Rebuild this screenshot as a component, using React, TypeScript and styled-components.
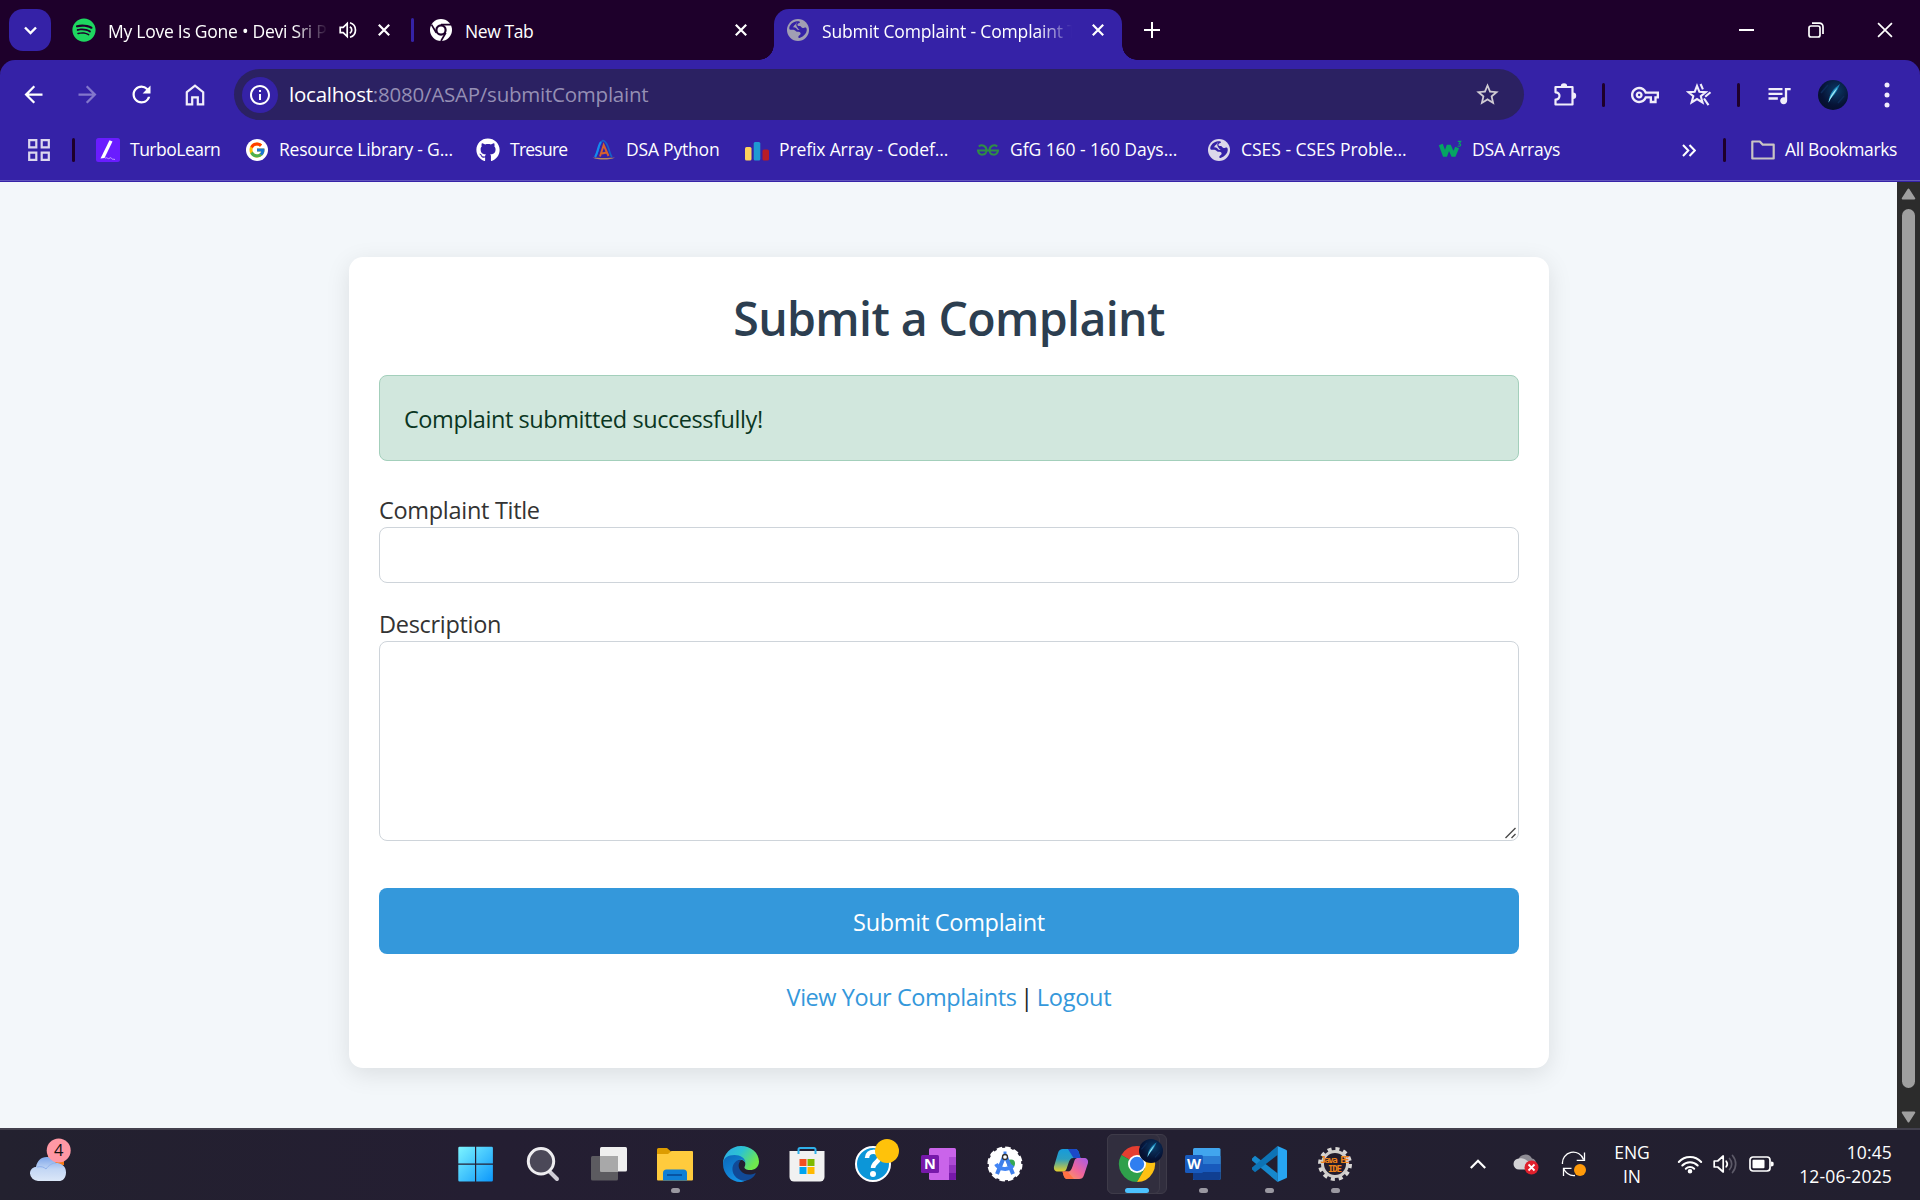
import React from "react";
import styled, { createGlobalStyle } from "styled-components";
import { FaSpotify, FaGithub } from "react-icons/fa";
import { FcGoogle } from "react-icons/fc";
import {
  MdArrowBack,
  MdArrowForward,
  MdRefresh,
  MdStarBorder,
  MdInfoOutline,
  MdQueueMusic,
  MdOutlineVpnKey,
} from "react-icons/md";

const GlobalStyle = createGlobalStyle`
  * { box-sizing: border-box; }
  body { margin: 0; overflow: hidden; font-family: "Open Sans", "Noto Sans", sans-serif; }
`;

const Screen = styled.div`
  width: 1920px;
  height: 1200px;
  display: flex;
  flex-direction: column;
  overflow: hidden;
  background: #1e002b;
`;

/* ---------- browser chrome ---------- */

const TabStrip = styled.header`
  height: 60px;
  flex: none;
  display: flex;
  align-items: center;
  padding-left: 9px;
  background: #1e002b;
  color: #fff;
`;

const TabSearch = styled.button`
  width: 42px;
  height: 42px;
  padding: 0;
  border: 0;
  border-radius: 14px;
  background: #3522a7;
  display: grid;
  place-items: center;
`;

const Tab = styled.div<{ $w: number; $pl: number; $active?: boolean }>`
  position: relative;
  width: ${(p) => p.$w}px;
  height: ${(p) => (p.$active ? 51 : 42)}px;
  align-self: ${(p) => (p.$active ? "flex-end" : "center")};
  padding-left: ${(p) => p.$pl}px;
  padding-bottom: ${(p) => (p.$active ? 9 : 0)}px;
  display: flex;
  align-items: center;
  border-radius: 15px 15px 0 0;
  background: ${(p) => (p.$active ? "#3522a7" : "transparent")};
  ${(p) =>
    p.$active &&
    `&::before, &::after {
      content: "";
      position: absolute;
      bottom: 0;
      width: 15px;
      height: 15px;
    }
    &::before { left: -15px; background: radial-gradient(circle at 0 0, transparent 14.5px, #3522a7 15px); }
    &::after { right: -15px; background: radial-gradient(circle at 100% 0, transparent 14.5px, #3522a7 15px); }`}
`;

const TabTitle = styled.span<{ $w: number; $ml: number; $ls?: number; $fade?: boolean }>`
  width: ${(p) => p.$w}px;
  margin-left: ${(p) => p.$ml}px;
  padding-top: 1px;
  white-space: nowrap;
  font-size: 17.5px;
  line-height: 26px;
  letter-spacing: ${(p) => p.$ls ?? 0}px;
  ${(p) => p.$fade && "mask-image: linear-gradient(90deg, #000 calc(100% - 36px), transparent calc(100% - 2px));"}
`;

const TabDivider = styled.i`
  width: 3px;
  height: 24px;
  border-radius: 2px;
  background: #3522a7;
`;

const IconSlot = styled.span<{ $w: number; $h?: number; $ml?: number; $c?: string }>`
  flex: none;
  width: ${(p) => p.$w}px;
  height: ${(p) => p.$h ?? p.$w}px;
  margin-left: ${(p) => p.$ml ?? 0}px;
  color: ${(p) => p.$c ?? "#fff"};
  display: flex;
  align-items: center;
  justify-content: center;
  svg { flex: none; display: block; }
`;

const WindowControls = styled.div`
  margin-left: auto;
  padding-right: 1px;
  display: flex;
  height: 58px;
`;

const WindowButton = styled.span`
  width: 69px;
  display: grid;
  place-items: center;
`;

const ToolArea = styled.div`
  height: 122px;
  flex: none;
  background: #3522a7;
  border-radius: 15px 15px 0 0;
  border-bottom: 1px solid #3522a7;
  box-shadow: inset 0 -1px 0 #6154bd;
`;

const Toolbar = styled.div`
  height: 69px;
  display: flex;
  align-items: center;
`;

const Omnibox = styled.div`
  width: 1290px;
  height: 51px;
  margin-left: 25px;
  padding: 0 24px 0 8px;
  border-radius: 26px;
  background: #2b2162;
  display: flex;
  align-items: center;
`;

const SiteInfo = styled.span`
  width: 36px;
  height: 36px;
  border-radius: 50%;
  background: #3522a7;
  color: #fff;
  display: grid;
  place-items: center;
`;

const Url = styled.span`
  flex: 1;
  margin-left: 11px;
  padding-bottom: 1px;
  font-size: 20.5px;
  letter-spacing: -0.23px;
  line-height: 30px;
  color: #958fb4;
  b { font-weight: 400; color: #fff; }
`;

const Separator = styled.i<{ $ml: number }>`
  flex: none;
  width: 3px;
  height: 24px;
  margin-left: ${(p) => p.$ml}px;
  border-radius: 2px;
  background: #1e002b;
`;

const Avatar = styled.span<{ $d: number }>`
  display: block;
  width: ${(p) => p.$d}px;
  height: ${(p) => p.$d}px;
  border-radius: 50%;
  overflow: hidden;
  background: radial-gradient(circle at 60% 35%, #0b3a66, #061336 55%, #040b22);
  svg { display: block; width: 100%; height: 100%; }
`;

const BookmarkBar = styled.nav`
  height: 42px;
  display: flex;
  align-items: center;
  color: #fff;
  font-size: 17.5px;
  line-height: 26px;
`;

const Bookmark = styled.a<{ $w: number; $ls?: number }>`
  flex: none;
  width: ${(p) => p.$w}px;
  display: flex;
  align-items: center;
  gap: 10px;
  white-space: nowrap;
  letter-spacing: ${(p) => p.$ls ?? -0.2}px;
  span:last-child { padding-bottom: 2px; }
`;

/* ---------- web page ---------- */

const Viewport = styled.div`
  flex: 1;
  display: flex;
  min-height: 0;
`;

const Page = styled.main`
  flex: 1;
  padding: 75px 0 0 349px;
  background: #f3f7fa;
`;

const Card = styled.section`
  width: 1200px;
  height: 811px;
  padding: 32px 30px 0;
  border-radius: 14px;
  background: #fff;
  box-shadow: 0 6px 24px rgba(0, 0, 0, 0.1);
`;

const Heading = styled.h2`
  margin: 0 0 28px;
  font-size: 46.5px;
  line-height: 58px;
  font-weight: 600;
  letter-spacing: -0.63px;
  text-align: center;
  color: #2c3e50;
`;

const Alert = styled.div`
  height: 86px;
  margin-bottom: 31px;
  padding: 25px 24px 0;
  border: 1px solid #a3cfbb;
  border-radius: 8px;
  background: #d1e7dd;
  color: #0a3622;
  font-size: 23.5px;
  line-height: 36px;
  letter-spacing: -0.43px;
`;

const Label = styled.label`
  display: block;
  height: 35px;
  font-size: 23.5px;
  line-height: 37px;
  letter-spacing: -0.3px;
  color: #333;
`;

const TextInput = styled.input`
  display: block;
  width: 100%;
  height: 56px;
  margin-bottom: 23px;
  border: 1px solid #ced4da;
  border-radius: 8px;
  background: #fff;
`;

const AreaWrap = styled.div`
  position: relative;
  height: 200px;
  margin-bottom: 47px;
  svg { position: absolute; right: 2px; bottom: 2px; }
`;

const TextArea = styled.textarea`
  display: block;
  width: 100%;
  height: 200px;
  resize: none;
  border: 1px solid #ced4da;
  border-radius: 8px;
  background: #fff;
`;

const SubmitButton = styled.button`
  display: block;
  width: 100%;
  height: 66px;
  margin-bottom: 25px;
  padding: 2px 0 0;
  border: 0;
  border-radius: 8px;
  background: #3498db;
  color: #fff;
  font: 23.5px "Open Sans", sans-serif;
  letter-spacing: -0.3px;
`;

const Links = styled.p`
  margin: 0;
  text-align: center;
  font-size: 23.5px;
  line-height: 36px;
  letter-spacing: -0.25px;
  color: #212529;
  a { color: #3498db; }
  a:first-child { letter-spacing: -0.45px; }
  span { margin: 0 -2px; }
`;

const Scrollbar = styled.div`
  width: 23px;
  background: #2c2c2c;
  display: flex;
  flex-direction: column;
  align-items: center;
  padding: 6px 0 5px;
`;

const Thumb = styled.div`
  width: 13px;
  height: 880px;
  margin: 9px 0 23px;
  border-radius: 7px;
  background: #9f9f9f;
`;

/* ---------- taskbar ---------- */

const Taskbar = styled.footer`
  height: 72px;
  flex: none;
  display: flex;
  border-top: 2px solid #42404d;
  background: linear-gradient(90deg, #23212f, #241e32 25%, #231f31 60%, #221f2f);
  color: #fff;
`;

const Weather = styled.div`
  width: 444px;
  padding: 7px 0 0 29px;
`;

const AppButton = styled.div`
  position: relative;
  width: 66px;
  height: 70px;
  display: flex;
  flex-direction: column;
  align-items: center;
  padding-top: 16px;
  svg { position: relative; display: block; overflow: visible; }
`;

const ActiveTile = styled.i<{ $w: number }>`
  position: absolute;
  left: 3px;
  top: 4px;
  width: ${(p) => p.$w}px;
  height: 60px;
  border: 1px solid #3e3b49;
  border-radius: 6px;
  background: #312e3e;
`;

const Running = styled.i<{ $active?: boolean }>`
  position: relative;
  width: ${(p) => (p.$active ? 24 : 9)}px;
  height: 5px;
  margin-top: 6px;
  border-radius: 3px;
  background: ${(p) => (p.$active ? "#4cc2ff" : "#9a98a1")};
`;

const AppBadge = styled.span`
  position: absolute;
  left: 35px;
  top: 9px;
`;

const Tray = styled.div`
  margin-left: auto;
  display: flex;
  align-items: center;
  height: 67px;
  padding-right: 28px;
`;

const TrayText = styled.div<{ $w: number; $align: string; $ls?: number }>`
  width: ${(p) => p.$w}px;
  text-align: ${(p) => p.$align};
  font-size: 17.5px;
  line-height: 24px;
  letter-spacing: ${(p) => p.$ls ?? 0}px;
`;

/* ---------- drawings ---------- */

const Cross = ({ s = 12, w = 2.2 }: { s?: number; w?: number }) => (
  <svg width={s} height={s} viewBox="0 0 12 12" stroke="#fff" strokeWidth={(w * 12) / s} fill="none">
    <path d="M.8.8l10.4 10.4M11.2.8L.8 11.2" />
  </svg>
);

const Globe = ({ c }: { c: string }) => (
  <svg width="22" height="22" viewBox="0 0 22 22">
    <circle cx="11" cy="11" r="11" fill={c} />
    <path
      d="M8.6 2.6c2.2-.8 4.6-.5 4.3.9-.2 1-2.3.6-2.5 2-.2 1.1.9 1.5 2.3 1.6 1.6.1 1.4 1.8 2.9 2 1.6.2 2.6-1.2 3.7-.2.9 1 .5 4-1.1 6.1-1.4 1.9-3.6 3.4-5.6 3.9-1.3.2-1.6-.6-1.1-1.6.6-1.2 2.4-1.3 2.1-3-.2-1.3-1.6-1.5-3.3-1.5-1.8 0-1.8-1.9-3.8-2.1-1.5-.1-3 .4-4.1-.5C1.7 7.3 4.5 3.7 8.6 2.6z"
      fill="#3522a7"
    />
    <path d="M10.4 3c-1.8.7-.9 2.2-2.600 2.900-1.300.6-1 2-2.300 2.300 1.800 0 3.500.3 4.200 1.600.5 1.100 1.700 1.200 3 1.300-1.400-1.100-2.700-3-3.200-4.100-.4-1.300-.4-2.800.9-4z" fill={c} />
  </svg>
);

const ChromeMono = () => (
  <svg width="22" height="22" viewBox="0 0 22 22">
    <circle cx="11" cy="11" r="11" fill="#fff" />
    <circle cx="11" cy="11" r="5.7" fill="#1e002b" />
    <circle cx="11" cy="11" r="3.5" fill="#fff" />
    <path d="M11 5.600h10M6.300 13.800L1.500 5.600M15.800 13.700L11 22" stroke="#1e002b" strokeWidth="1.7" />
  </svg>
);

const Speaker = () => (
  <svg width="18" height="18" viewBox="0 0 18 18" fill="none" stroke="#fff" strokeWidth="1.7">
    <path d="M1.200 6.300h3l4-3.900v13.200l-4-3.900h-3z" />
    <path d="M10.800 5.800a3.600 3.600 0 010 6.400M11 1.700a7.600 7.600 0 010 14.600" />
  </svg>
);

const Comet = () => (
  <svg viewBox="0 0 30 30">
    <path d="M10.500 23C11 14 15 9 22 4c-2.500 6-4 9-7.500 12.500-2 2-3 4-4 6.500z" fill="#1b86b8" />
    <path d="M10.500 22.500C12 16 15 12 19.500 7.500 17.500 12 14.500 15.500 10.500 22.500z" fill="#9fe8f5" />
    <path d="M3 13l7-8M20 23l6-7" stroke="#0c2a57" strokeWidth="1.5" />
  </svg>
);

const Home = () => (
  <svg width="20" height="22" viewBox="0 0 20 22" fill="none" stroke="#f1eefa" strokeWidth="2.2">
    <path d="M1.800 8.200L10 1.700l8.200 6.500v12.200h-5.400v-7H7.200v7H1.800z" />
  </svg>
);

const Extension = () => (
  <svg width="26" height="26" viewBox="0 0 26 26">
    <path
      d="M3.500 5h17v17.500h-17v-4.800c5 .2 5.600-7.500 0-7.400z"
      fill="none"
      stroke="#f1eefa"
      strokeWidth="2.2"
      strokeLinejoin="round"
    />
    <path d="M8.800 4.500a3.200 3.200 0 016.400 0zM21 10.500a3.200 3.200 0 010 6.400z" fill="#f1eefa" />
  </svg>
);

const StarEdit = () => (
  <svg width="26" height="26" viewBox="0 0 26 26" fill="none" stroke="#f1eefa" strokeWidth="2.1">
    <path d="M11 3.800l2.400 6 6.300.4-4.900 4 1.700 6.300L11 17.100l-5.400 3.400 1.700-6.300-4.900-4 6.300-.4z" />
    <path d="M14.600 2l2.300 5.400M24.500 10.300l-5.300 4.500M18 16.500l4.500 6.700" />
  </svg>
);

const Grid = () => (
  <svg width="22" height="22" viewBox="0 0 22 22" fill="none" stroke="#dcd7ee" strokeWidth="2.2">
    <path d="M1.200 1.200h7.100v7.100H1.200zM13.700 1.200h7.100v7.100h-7.100zM1.200 13.700h7.100v7.100H1.200zM13.700 13.700h7.100v7.100h-7.100z" />
  </svg>
);

const Turbo = () => (
  <svg width="24" height="24" viewBox="0 0 24 24">
    <rect width="24" height="24" rx="2.5" fill="#6a1cff" />
    <path d="M13.500 2.200l3 1.300-8 16.500-4 .5z" fill="#fff" />
    <path d="M9 20.500c2-2 2.500.8 4 0s2-1.300 2.600 0 1.700.3 3.400 1" stroke="#c9a9ff" fill="none" strokeWidth=".9" />
  </svg>
);

const DsaLogo = () => (
  <svg width="24" height="24" viewBox="0 0 24 24" fill="none">
    <path d="M3 19C6.500 15 6.500 4 11 2.500c6 1.500 5.500 12.500 9 16.500" stroke="#1560c8" strokeWidth="1.7" />
    <path d="M3 19C6 15 6.500 6 9 4" stroke="#138bf0" strokeWidth="2.2" />
    <path d="M.5 19.500c5 .6 17.500.6 22.500 0-5 2.700-17 2.900-22.500 0z" fill="#b98b5d" />
    <path d="M8 18.500L11.700 7l4.800 11M9.800 15.500l5-1" stroke="#d6612f" strokeWidth="2" />
  </svg>
);

const Codeforces = () => (
  <svg width="24" height="24" viewBox="0 0 24 24">
    <rect y="9" width="6.5" height="13.500" rx="1.5" fill="#fdd15c" />
    <rect x="8.7" y="4" width="6.6" height="18.500" rx="1.5" fill="#1e9ad2" />
    <rect x="17.5" y="11.500" width="6.500" height="11" rx="1.5" fill="#b71c27" />
  </svg>
);

const Gfg = () => (
  <svg width="24" height="24" viewBox="0 0 24 24" fill="none" stroke="#2f8d46" strokeWidth="2">
    <path d="M1 12.500h22M2.800 8.500c3-2.600 7.700-.6 7.700 3.700 0 5.400-7.500 6.200-8.500.5M21.200 8.500c-3-2.600-7.700-.6-7.700 3.700 0 5.400 7.500 6.200 8.500.5" />
  </svg>
);

const W3 = () => (
  <svg width="24" height="24" viewBox="0 0 24 24" fill="none" stroke="#05a463">
    <path d="M2.800 6.500L7 18l3.800-10.500L15.500 18l3.600-8.500" strokeWidth="4.200" strokeLinejoin="bevel" />
    <path d="M19.800 3.400h3l-1.600 2.300c2.300-.3 2.200 3.200-1.600 2.300" strokeWidth="1.100" />
  </svg>
);

const Folder = () => (
  <svg width="24" height="22" viewBox="0 0 24 22" fill="none" stroke="#c9c4c4" strokeWidth="2.2" strokeLinejoin="round">
    <path d="M1.300 19.500v-17h7.500l3 3.200h10.900v13.800z" />
  </svg>
);

const WeatherArt = () => (
  <svg width="46" height="46" viewBox="0 0 46 46">
    <defs>
      <linearGradient id="cl" x1="0" y1="0" x2="0" y2="1">
        <stop offset="0" stopColor="#7ea6ea" />
        <stop offset=".5" stopColor="#c2d6f4" />
        <stop offset="1" stopColor="#dbe7f8" />
      </linearGradient>
    </defs>
    <path d="M19 17h16v11H19z" fill="#f57c17" />
    <path d="M9 44a8 8 0 01-8-7.500c0-4 3-6.500 6-6.500 1-6 5-10 10.500-10 4.500 0 7.500 2.500 9 6 5.500 0 10.500 2.500 10.500 9.500 0 6-3.500 8.500-7 8.500z" fill="url(#cl)" />
    <path d="M8 30c4-1 7 0 9 2 3-4 6-6 10-6" fill="none" stroke="#8fb1ec" strokeWidth="1" />
    <circle cx="29.7" cy="13.500" r="12" fill="#ff98a4" />
    <text x="29.7" y="19.200" fontSize="16.500" textAnchor="middle" fill="#111" fontFamily="Open Sans, sans-serif">4</text>
  </svg>
);

const WinLogo = () => (
  <svg width="36" height="36" viewBox="1.500 0 36 36">
    <defs>
      <linearGradient id="wl" x1="0" y1="0" x2="1" y2="1">
        <stop offset="0" stopColor="#7df5ff" />
        <stop offset="1" stopColor="#0c97fb" />
      </linearGradient>
    </defs>
    <path d="M2 .8h15.500v16.700H.8V2A1.200 1.200 0 012 .8zM18.700.8h15.500a1.200 1.200 0 011.200 1.200v15.500H18.700zM.8 18.700h16.700v16.700H2a1.200 1.200 0 01-1.200-1.200zM18.700 18.700h16.700v15.500a1.200 1.200 0 01-1.200 1.200H18.700z" fill="url(#wl)" />
  </svg>
);

const SearchArt = () => (
  <svg width="36" height="36" viewBox="0 0 36 36">
    <path d="M24.500 25.500l7.500 7.500" stroke="#cfcdd6" strokeWidth="4" strokeLinecap="round" />
    <circle cx="16" cy="15.300" r="12.700" fill="#4b4858" stroke="#eeedf0" strokeWidth="3" />
  </svg>
);

const TaskViewArt = () => (
  <svg width="36" height="36" viewBox="0 0 36 36">
    <rect x="0" y="10" width="27" height="24.500" rx="1.500" fill="#5c5b60" />
    <rect x="9" y="1" width="27" height="24.500" rx="1.500" fill="#efefef" />
    <path d="M9 10h18v15.500H9z" fill="#a8a8a9" />
  </svg>
);

const ExplorerArt = () => (
  <svg width="36" height="36" viewBox="0 0 36 36">
    <path d="M0 3.500A1.500 1.500 0 011.500 2H10l4 3.500V12H0z" fill="#dd9c00" />
    <path d="M0 8h11l3.500-3H35a1 1 0 011 1v27.500a1 1 0 01-1 1H1a1 1 0 01-1-1z" fill="#ffcb3d" />
    <path d="M6 34.500V27a3.500 3.500 0 013.500-3.500h17A3.500 3.500 0 0130 27v7.500z" fill="#0f7fd6" />
    <path d="M10 29h15" stroke="#07509e" strokeWidth="1.8" />
  </svg>
);

const EdgeArt = () => (
  <svg width="36" height="36" viewBox="0 0 36 36">
    <defs>
      <linearGradient id="e1" x1="0" y1="0" x2="1" y2=".5">
        <stop offset="0" stopColor="#2ea7ea" />
        <stop offset=".5" stopColor="#2cc3d2" />
        <stop offset="1" stopColor="#6fe84d" />
      </linearGradient>
      <linearGradient id="e2" x1="0" y1="0" x2=".6" y2="1">
        <stop offset="0" stopColor="#0b66b8" />
        <stop offset="1" stopColor="#1594e6" />
      </linearGradient>
    </defs>
    <path d="M0 18C0 8 8 0 18 0s18 7 18 15.500c0 6-4.500 8.500-9 8.500-4 0-6-1.500-5.500-3 2-3.500.5-7.500-5-7.500C10 13.500 6 16 0 18z" fill="url(#e1)" />
    <path d="M0 18c0-6 5-9 11.500-9 6 0 11 3 11 8-1-3-4-3.500-5.500-3.500-4 2-5 6-3.500 11 1.500 5 6 8.500 12 8.500-4 2.500-7 3-8 3C8 36 0 28 0 18z" fill="url(#e2)" />
    <path d="M14 14.500c-5 3.500-6 9.500-2.500 15 4 5.500 11 7 17.500 2.500 2.500-2 4-4.500 3.500-5-6 2.800-12 1.500-15-2.500-2.500-3.500-2.500-7 .5-10.500z" fill="#114a97" />
  </svg>
);

const StoreArt = () => (
  <svg width="36" height="36" viewBox="0 0 36 36">
    <path d="M9.500 8V3.500a1.500 1.500 0 011.500-1.500h14a1.500 1.500 0 011.500 1.500V8" fill="none" stroke="#2fb0ea" strokeWidth="2" />
    <path d="M.5 5h35v26a4.500 4.500 0 01-4.500 4.500H5A4.500 4.500 0 01.5 31z" fill="#f1f1f1" />
    <path d="M9.500 8V5M26.500 8V5" stroke="#2fb0ea" strokeWidth="2" />
    <path d="M10.500 13h7v7h-7z" fill="#f25022" />
    <path d="M18.500 13h7v7h-7z" fill="#7fba00" />
    <path d="M10.500 21h7v7h-7z" fill="#00a4ef" />
    <path d="M18.500 21h7v7h-7z" fill="#ffb900" />
  </svg>
);

const HelpArt = () => (
  <svg width="36" height="36" viewBox="0 0 36 36">
    <circle cx="18" cy="18" r="17" fill="#0c96d8" stroke="#fff" strokeWidth="2" />
    <path d="M12 12c0-8 12.500-8 12.500-1 0 5-6.500 5.500-6.500 11" fill="none" stroke="#fff" strokeWidth="4.500" />
    <circle cx="18" cy="28" r="3" fill="#fff" />
    <circle cx="32" cy="5" r="12" fill="#ffc20a" />
  </svg>
);

const OfficeLetter = ({ letter, c }: { letter: string; c: string }) => (
  <>
    <rect x="0" y="9" width="18" height="18" rx="1.500" fill={c} />
    <text x="9" y="23.300" textAnchor="middle" fontSize="14.500" fontWeight="700" fill="#fff" fontFamily="Open Sans, sans-serif">
      {letter}
    </text>
  </>
);

const OneNoteArt = () => (
  <svg width="36" height="36" viewBox="0 0 36 36">
    <rect x="8" y="2" width="27" height="32" rx="1.500" fill="#ca64ea" />
    <path d="M28 11h7v8h-7z" fill="#ae4bd5" />
    <path d="M28 19h7v7.500h-7z" fill="#9332bf" />
    <path d="M28 26.500h7v6a1.500 1.500 0 01-1.500 1.500H28z" fill="#7719aa" />
    <OfficeLetter letter="N" c="#7719aa" />
  </svg>
);

const WordArt = () => (
  <svg width="36" height="36" viewBox="0 0 36 36">
    <rect x="8" y="2" width="27.500" height="32" rx="1.500" fill="#41a5ee" />
    <path d="M8 10h27.500v8H8z" fill="#2b7cd3" />
    <path d="M8 18h27.500v8H8z" fill="#185abd" />
    <path d="M8 26h27.500v6.500A1.500 1.500 0 0134 34H9.500A1.500 1.500 0 018 32.500z" fill="#103f91" />
    <OfficeLetter letter="W" c="#185abd" />
  </svg>
);

const StudioArt = () => (
  <svg width="36" height="36" viewBox="0 0 36 36">
    <circle cx="18" cy="18" r="16.300" fill="#fff" stroke="#fff" strokeWidth="2.500" strokeDasharray="5.500 3" />
    <circle cx="24" cy="17.500" r="4" fill="#34a853" />
    <path d="M17 11L10 28M19 11l7 17" stroke="#3f7fea" strokeWidth="4" />
    <path d="M9 18c3 5.500 12 7 17 1.500" fill="none" stroke="#4285f4" strokeWidth="4" />
    <path d="M18 5.500v5" stroke="#4285f4" strokeWidth="3" />
    <circle cx="18" cy="11" r="2.500" fill="#fff" stroke="#303030" strokeWidth="1.300" />
  </svg>
);

const CopilotArt = () => (
  <svg width="36" height="36" viewBox="0 0 36 36">
    <defs>
      <linearGradient id="c1" x1="0" y1="0" x2="0" y2="1">
        <stop offset="0" stopColor="#169bdc" />
        <stop offset=".45" stopColor="#2c9fc0" />
        <stop offset="1" stopColor="#e4cf2b" />
      </linearGradient>
      <linearGradient id="c2" x1="1" y1="0" x2="0" y2="1">
        <stop offset="0" stopColor="#a55be8" />
        <stop offset=".5" stopColor="#f0659c" />
        <stop offset="1" stopColor="#ffa64a" />
      </linearGradient>
    </defs>
    <path d="M10 3h12c2.500 0 3.500 2 4 4l1.500 5h-7c-3 0-4 2-5 5l-2 6c-.7 2-2 2.500-4 2.500H5c-3 0-4.500-2-4-5L5 7c1-3 2.500-4 5-4z" fill="url(#c1)" />
    <path d="M15 3h7c2.500 0 3.500 2 4 4l1.500 5h-7z" fill="#1b49c8" />
    <path d="M26 33H14.500c-2.500 0-3.500-2-4-4l-1-3.500h5c3 0 4-2 5-5l2-6c.7-2 2-2.500 4-2.500H31c3 0 4.500 2 4 5l-4 12c-1 3-2.500 4-5 4z" fill="url(#c2)" />
    <path d="M21 33h-6.500c-2.500 0-3.500-2-4-4l-1-3.500h5z" fill="#ff7245" />
  </svg>
);

const ChromeArt = () => (
  <svg width="36" height="36" viewBox="0 0 36 36">
    <path d="M18 18L2.400 9A18 18 0 0133.600 9z" fill="#e53e30" />
    <path d="M18 18L2.400 9A18 18 0 0018 36l7.800-13.500z" fill="#2fa04b" />
    <path d="M18 9h15.600A18 18 0 0118 36l7.800-13.500z" fill="#fdc113" />
    <circle cx="18" cy="18" r="9" fill="#fff" />
    <circle cx="18" cy="18" r="7.200" fill="#2f7ef0" />
  </svg>
);

const CodeArt = () => (
  <svg width="36" height="36" viewBox="0 0 36 36">
    <path d="M1 12.500l3-2.700 22.500 17.400V36L1 14.500z" fill="#1688cc" />
    <path d="M1 23.500l3 2.700L26.500 9V0L1 21.500z" fill="#0d73b5" />
    <path d="M26.500 0L35 3.700a1.500 1.500 0 011 1.400v25.800a1.500 1.500 0 01-1 1.400L26.500 36z" fill="#27a5f2" />
  </svg>
);

const JeeArt = () => (
  <svg width="36" height="36" viewBox="0 0 36 36">
    <circle cx="18" cy="18" r="15" fill="none" stroke="#d8d6d4" strokeWidth="4" strokeDasharray="4 3.850" />
    <circle cx="18" cy="18" r="12.500" fill="#221c2c" stroke="#cfcdca" strokeWidth="3" />
    <text x="18" y="17" textAnchor="middle" fontSize="9" fontWeight="700" fill="#f08418" fontFamily="DejaVu Sans Mono, monospace" textLength="29">Java EE</text>
    <text x="18" y="25.500" textAnchor="middle" fontSize="9" fontWeight="700" fill="#f08418" fontFamily="DejaVu Sans Mono, monospace" textLength="14">IDE</text>
  </svg>
);

const Chevron = () => (
  <svg width="16" height="10" viewBox="0 0 16 10" fill="none" stroke="#fff" strokeWidth="2.2">
    <path d="M.8 9L8 1.800 15.200 9" />
  </svg>
);

const OneDrive = () => (
  <svg width="26" height="22" viewBox="0 0 26 22">
    <path d="M5 8a7.500 7.500 0 0114-2.500c3 .5 4.500 3 4 6H8z" fill="#8e8c94" />
    <path d="M6 16.500a5.500 5.500 0 010-11c5-1.500 7 2 11 4v7z" fill="#d3d2d5" />
    <circle cx="18.500" cy="14.500" r="7" fill="#e0202c" />
    <path d="M15.500 11.500l6 6M21.500 11.500l-6 6" stroke="#fff" strokeWidth="1.8" />
  </svg>
);

const Sync = () => (
  <svg width="26" height="26" viewBox="0 0 26 26" fill="none" stroke="#fff" strokeWidth="1.3">
    <path d="M1.500 13A10.800 10.800 0 0122.500 8.500M23.500 1.500v7.800h-7.800M14 24.500c-5 .5-9-2-11.500-7M2.500 25v-7.700h8" />
    <circle cx="19" cy="19" r="6" fill="#ff9a0a" stroke="none" />
  </svg>
);

const Wifi = () => (
  <svg width="26" height="20" viewBox="0 0 26 20" fill="none" stroke="#fff" strokeWidth="2" strokeLinecap="round">
    <path d="M1.800 8a15 15 0 0122.400 0M5.300 11.500a10.500 10.500 0 0115.400 0M8.800 14.700a6 6 0 018.400 0" />
    <circle cx="13" cy="17.300" r="1.300" fill="#fff" />
  </svg>
);

const Volume = () => (
  <svg width="25" height="20" viewBox="0 0 25 20" fill="none" strokeWidth="1.7" strokeLinecap="round" strokeLinejoin="round">
    <path d="M1.200 7h3.500l5.500-5v16l-5.500-5H1.200zM13.200 7.200a4.500 4.500 0 010 5.600" stroke="#fff" />
    <path d="M16.500 4.500a8 8 0 010 11M19.500 1.500a13 13 0 010 17" stroke="#5d5a68" />
  </svg>
);

const Battery = () => (
  <svg width="25" height="16" viewBox="0 0 25 16">
    <rect x="1" y="1" width="20" height="14" rx="3" fill="none" stroke="#fff" strokeWidth="1.7" />
    <rect x="3.500" y="3.700" width="12" height="8.600" rx="1" fill="#fff" />
    <path d="M22 5.500c2 0 2.700.7 2.700 2.500S24 10.500 22 10.500z" fill="#fff" />
  </svg>
);

/* ---------- data ---------- */

const bookmarks: { label: string; w: number; ls?: number; icon: React.ReactNode }[] = [
  { label: "TurboLearn", w: 149, ls: -0.5, icon: <Turbo /> },
  {
    label: "Resource Library - G...",
    w: 231,
    icon: (
      <svg width="22" height="22" viewBox="0 0 22 22">
        <circle cx="11" cy="11" r="11" fill="#fff" />
        <FcGoogle x={2} y={2} size={18} />
      </svg>
    ),
  },
  { label: "Tresure", w: 116, ls: -0.75, icon: <FaGithub size={24} /> },
  { label: "DSA Python", w: 153, icon: <DsaLogo /> },
  { label: "Prefix Array - Codef...", w: 231, ls: -0.12, icon: <Codeforces /> },
  { label: "GfG 160 - 160 Days...", w: 231, ls: -0.06, icon: <Gfg /> },
  { label: "CSES - CSES Proble...", w: 231, ls: -0.02, icon: <Globe c="#dcd8ea" /> },
  { label: "DSA Arrays", w: 242, icon: <W3 /> },
];

const apps: { name: string; art: React.ReactNode; state?: "running" | "active" }[] = [
  { name: "start", art: <WinLogo /> },
  { name: "search", art: <SearchArt /> },
  { name: "taskview", art: <TaskViewArt /> },
  { name: "explorer", art: <ExplorerArt />, state: "running" },
  { name: "edge", art: <EdgeArt /> },
  { name: "store", art: <StoreArt /> },
  { name: "help", art: <HelpArt /> },
  { name: "onenote", art: <OneNoteArt /> },
  { name: "studio", art: <StudioArt /> },
  { name: "copilot", art: <CopilotArt /> },
  { name: "chrome", art: <ChromeArt />, state: "active" },
  { name: "word", art: <WordArt />, state: "running" },
  { name: "code", art: <CodeArt />, state: "running" },
  { name: "jee", art: <JeeArt />, state: "running" },
];

export default function App() {
  return (
    <Screen>
      <GlobalStyle />
      <TabStrip>
        <TabSearch>
          <svg width="13" height="9" viewBox="0 0 13 9" fill="none" stroke="#fff" strokeWidth="2.4">
            <path d="M1 1.500l5.500 5.500L12 1.500" />
          </svg>
        </TabSearch>
        <Tab $w={360} $pl={21}>
          <IconSlot $w={24} $c="#1ed760">
            <FaSpotify size={24} />
          </IconSlot>
          <TabTitle $w={222} $ml={12} $ls={-0.25} $fade>
            My Love Is Gone • Devi Sri P
          </TabTitle>
          <IconSlot $w={18} $ml={9}>
            <Speaker />
          </IconSlot>
          <IconSlot $w={18} $ml={18}>
            <Cross />
          </IconSlot>
        </Tab>
        <TabDivider />
        <Tab $w={360} $pl={15}>
          <IconSlot $w={24}>
            <ChromeMono />
          </IconSlot>
          <TabTitle $w={260} $ml={12} $ls={-0.4}>
            New Tab
          </TabTitle>
          <IconSlot $w={18} $ml={7}>
            <Cross />
          </IconSlot>
        </Tab>
        <Tab $w={348} $pl={12} $active>
          <IconSlot $w={24}>
            <Globe c="#a19fb3" />
          </IconSlot>
          <TabTitle $w={252} $ml={12} $ls={-0.15} $fade>
            Submit Complaint - Complaint T
          </TabTitle>
          <IconSlot $w={18} $ml={15}>
            <Cross />
          </IconSlot>
        </Tab>
        <IconSlot $w={20} $ml={20}>
          <svg width="16" height="16" viewBox="0 0 16 16" stroke="#fff" strokeWidth="2">
            <path d="M8 0v16M0 8h16" />
          </svg>
        </IconSlot>
        <WindowControls>
          <WindowButton>
            <svg width="15" height="2">
              <path d="M0 1h15" stroke="#fff" strokeWidth="2" />
            </svg>
          </WindowButton>
          <WindowButton>
            <svg width="16" height="16" viewBox="0 0 16 16" fill="none" stroke="#fff" strokeWidth="1.7">
              <rect x="1" y="4" width="11" height="11" rx="2" />
              <path d="M4 1.200h7.500a3.500 3.500 0 013.500 3.500V12" />
            </svg>
          </WindowButton>
          <WindowButton>
            <Cross s={16} w={1.7} />
          </WindowButton>
        </WindowControls>
      </TabStrip>

      <ToolArea>
        <Toolbar>
          <IconSlot $w={28} $ml={19}>
            <MdArrowBack size={27} />
          </IconSlot>
          <IconSlot $w={28} $ml={26} $c="#8377cc">
            <MdArrowForward size={27} />
          </IconSlot>
          <IconSlot $w={28} $ml={26}>
            <MdRefresh size={27} />
          </IconSlot>
          <IconSlot $w={28} $ml={26}>
            <Home />
          </IconSlot>
          <Omnibox>
            <SiteInfo>
              <MdInfoOutline size={24} />
            </SiteInfo>
            <Url>
              <b>localhost</b>:8080/ASAP/submitComplaint
            </Url>
            <IconSlot $w={26} $c="#cfcbd2">
              <MdStarBorder size={27} />
            </IconSlot>
          </Omnibox>
          <IconSlot $w={26} $ml={28}>
            <Extension />
          </IconSlot>
          <Separator $ml={24} />
          <IconSlot $w={28} $ml={26} $c="#f1eefa">
            <MdOutlineVpnKey size={28} />
          </IconSlot>
          <IconSlot $w={26} $ml={27}>
            <StarEdit />
          </IconSlot>
          <Separator $ml={25} />
          <IconSlot $w={28} $ml={25} $c="#f1eefa">
            <MdQueueMusic size={28} />
          </IconSlot>
          <IconSlot $w={30} $ml={25}>
            <Avatar $d={30}>
              <Comet />
            </Avatar>
          </IconSlot>
          <IconSlot $w={30} $ml={24} $c="#f1eefa">
            <svg width="6" height="26" viewBox="0 0 6 26" fill="currentColor">
              <circle cx="3" cy="3" r="2.5" />
              <circle cx="3" cy="13" r="2.5" />
              <circle cx="3" cy="23" r="2.5" />
            </svg>
          </IconSlot>
        </Toolbar>
        <BookmarkBar>
          <IconSlot $w={22} $ml={28}>
            <Grid />
          </IconSlot>
          <Separator $ml={22} />
          <IconSlot $w={21} />
          {bookmarks.map((b) => (
            <Bookmark key={b.label} $w={b.w} $ls={b.ls}>
              <IconSlot $w={24}>{b.icon}</IconSlot>
              <span>{b.label}</span>
            </Bookmark>
          ))}
          <IconSlot $w={18}>
            <svg width="14" height="13" viewBox="0 0 14 13" fill="none" stroke="#fff" strokeWidth="2">
              <path d="M1 1l5.300 5.500L1 12M7.500 1l5.300 5.500L7.500 12" />
            </svg>
          </IconSlot>
          <Separator $ml={25} />
          <IconSlot $w={24} />
          <Bookmark $w={160} $ls={-0.35}>
            <IconSlot $w={25}>
              <Folder />
            </IconSlot>
            <span>All Bookmarks</span>
          </Bookmark>
        </BookmarkBar>
      </ToolArea>

      <Viewport>
        <Page>
          <Card>
            <Heading>Submit a Complaint</Heading>
            <Alert>Complaint submitted successfully!</Alert>
            <Label htmlFor="title">Complaint Title</Label>
            <TextInput id="title" />
            <Label htmlFor="description">Description</Label>
            <AreaWrap>
              <TextArea id="description" />
              <svg width="12" height="12" viewBox="0 0 12 12" stroke="#4a4a4a" strokeWidth="1.4">
                <path d="M.5 11L10.500 1M6.500 11l4-4" />
              </svg>
            </AreaWrap>
            <SubmitButton>Submit Complaint</SubmitButton>
            <Links>
              <a>View Your Complaints</a> <span>|</span> <a>Logout</a>
            </Links>
          </Card>
        </Page>
        <Scrollbar>
          <svg width="15" height="12" viewBox="0 0 15 12">
            <path d="M7.500 1.500l5.800 9H1.700z" fill="#9f9f9f" stroke="#9f9f9f" strokeWidth="2" strokeLinejoin="round" />
          </svg>
          <Thumb />
          <svg width="15" height="12" viewBox="0 0 15 12">
            <path d="M7.500 10.500l5.800-9H1.700z" fill="#9f9f9f" stroke="#9f9f9f" strokeWidth="2" strokeLinejoin="round" />
          </svg>
        </Scrollbar>
      </Viewport>

      <Taskbar>
        <Weather>
          <WeatherArt />
        </Weather>
        {apps.map((a) => (
          <AppButton key={a.name}>
            {a.state === "active" && <ActiveTile $w={60} />}
            {a.state === "active" && <ActiveTile $w={53} />}
            {a.art}
            {a.state && <Running $active={a.state === "active"} />}
            {a.state === "active" && (
              <AppBadge>
                <Avatar $d={24}>
                  <Comet />
                </Avatar>
              </AppBadge>
            )}
          </AppButton>
        ))}
        <Tray>
          <IconSlot $w={18}>
            <Chevron />
          </IconSlot>
          <IconSlot $w={26} $ml={26}>
            <OneDrive />
          </IconSlot>
          <IconSlot $w={26} $ml={22}>
            <Sync />
          </IconSlot>
          <TrayText $w={90} $align="center">
            ENG
            <br />
            IN
          </TrayText>
          <IconSlot $w={26}>
            <Wifi />
          </IconSlot>
          <IconSlot $w={25} $ml={10}>
            <Volume />
          </IconSlot>
          <IconSlot $w={25} $ml={11}>
            <Battery />
          </IconSlot>
          <TrayText $w={118} $align="right" $ls={0.15}>
            10:45
            <br />
            12-06-2025
          </TrayText>
        </Tray>
      </Taskbar>
    </Screen>
  );
}
